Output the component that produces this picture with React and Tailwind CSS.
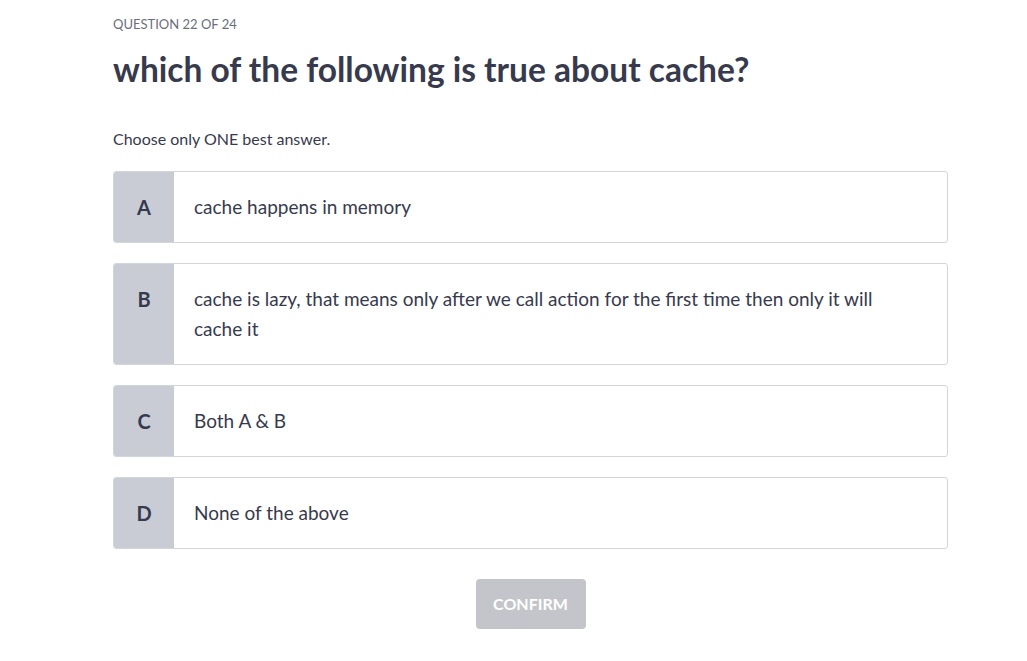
const options = [
  { key: 'A', text: 'cache happens in memory' },
  { key: 'B', text: 'cache is lazy, that means only after we call action for the first time then only it will cache it' },
  { key: 'C', text: 'Both A & B' },
  { key: 'D', text: 'None of the above' },
];

export default function App() {
  return (
    <div className="min-h-screen bg-white font-['Lato',sans-serif] text-[#373a4d]">
      <div className="ml-[113px] w-[835px] pt-[15px]">
        <div className="text-[13px] leading-[18px] text-[#6b6e7e] uppercase">Question 22 of 24</div>
        <h1 className="mt-[16px] text-[33.5px] leading-[40px] font-bold">which of the following is true about cache?</h1>
        <p className="mt-[40px] text-[16px] leading-[20px]">Choose only ONE best answer.</p>
        <div className="mt-[22px] flex flex-col gap-[20px]">
          {options.map((opt) => (
            <div key={opt.key} className="flex rounded-[3px] border border-[#d3d5dc] overflow-hidden cursor-pointer">
              <div className="w-[60px] shrink-0 bg-[#c9ccd5] py-[20px] text-center text-[20px] leading-[30px] font-bold">
                {opt.key}
              </div>
              <div className="flex-1 pl-[20px] pr-[60px] py-[20px] text-[19px] leading-[30px]">{opt.text}</div>
            </div>
          ))}
        </div>
        <div className="mt-[30px] flex justify-center">
          <button className="w-[110px] h-[50px] rounded-[4px] bg-[#c4c5ca] text-white text-[16px] font-bold uppercase">
            Confirm
          </button>
        </div>
      </div>
    </div>
  );
}
